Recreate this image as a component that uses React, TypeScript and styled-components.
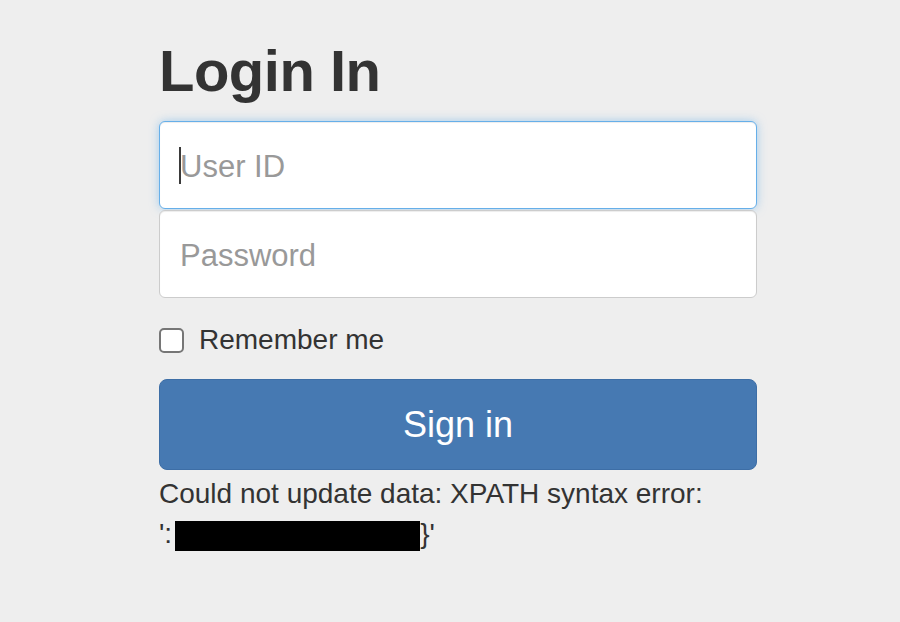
import styled, { createGlobalStyle } from "styled-components";

const GlobalStyle = createGlobalStyle`
  html, body {
    margin: 0;
    padding: 0;
    background: #eeeeee;
    font-family: "Liberation Sans", Arial, Helvetica, sans-serif;
    color: #333333;
  }
  * {
    box-sizing: border-box;
  }
`;

const App = () => {
  return (
    <>
      <GlobalStyle />
      <Page>
        <SignInForm onSubmit={(e) => e.preventDefault()}>
          <Heading>Login In</Heading>
          <FieldWrap>
            <Field type="text" placeholder="User ID" $focused />
            <Caret />
          </FieldWrap>
          <FieldWrap>
            <Field type="password" placeholder="Password" />
          </FieldWrap>
          <RememberRow>
            <HiddenCheck type="checkbox" />
            <CheckBox />
            Remember me
          </RememberRow>
          <SubmitButton type="submit">Sign in</SubmitButton>
          <ErrorText>
            Could not update data: XPATH syntax error:
            <br />
            {"':"}
            <Redacted />
            {"}'"}
          </ErrorText>
        </SignInForm>
      </Page>
    </>
  );
};

export default App;

// Styled Components
const Page = styled.div`
  width: 614px;
  margin: 0 auto;
  padding: 39px 0 0 16px;
`;

const SignInForm = styled.form`
  display: flex;
  flex-direction: column;
  width: 598px;
`;

const Heading = styled.h2`
  margin: 0 0 18px;
  font-size: 58px;
  line-height: 64px;
  font-weight: 700;
  color: #333333;
  letter-spacing: -0.5px;
`;

const FieldWrap = styled.div`
  position: relative;

  & + & {
    margin-top: 1px;
  }
`;

const Field = styled.input<{ $focused?: boolean }>`
  display: block;
  width: 100%;
  height: 88px;
  padding: 3px 20px 0;
  font-family: inherit;
  font-size: 31px;
  color: #555555;
  background: #ffffff;
  border: 1px solid ${(p) => (p.$focused ? "#66afe9" : "#cccccc")};
  border-radius: 6px;
  outline: none;
  box-shadow: ${(p) =>
    p.$focused
      ? "inset 0 1px 1px rgba(0,0,0,.075), 0 0 10px rgba(102,175,233,.55)"
      : "inset 0 1px 1px rgba(0,0,0,.075)"};

  &::placeholder {
    color: #999999;
  }
`;

const Caret = styled.span`
  position: absolute;
  left: 20px;
  top: 26px;
  width: 2px;
  height: 37px;
  background: #3a3a3a;
  pointer-events: none;
`;

const RememberRow = styled.label`
  display: flex;
  align-items: center;
  gap: 15px;
  margin-top: 22px;
  height: 40px;
  font-size: 28px;
  color: #333333;
  cursor: pointer;
`;

const HiddenCheck = styled.input`
  display: none;
`;

const CheckBox = styled.span`
  width: 25px;
  height: 25px;
  border: 2px solid #767676;
  border-radius: 5px;
  background: #ffffff;
  flex: none;
`;

const SubmitButton = styled.button`
  margin-top: 19px;
  height: 91px;
  width: 100%;
  font-family: inherit;
  font-size: 36px;
  color: #ffffff;
  background: #4679b2;
  border: 1px solid #3d6ea6;
  border-radius: 8px;
  cursor: pointer;
`;

const ErrorText = styled.div`
  margin-top: 4px;
  font-size: 28px;
  line-height: 40px;
  color: #333333;
`;

const Redacted = styled.span`
  display: inline-block;
  width: 245px;
  height: 30px;
  background: #000000;
  vertical-align: -8px;
  margin-left: 3px;
`;
